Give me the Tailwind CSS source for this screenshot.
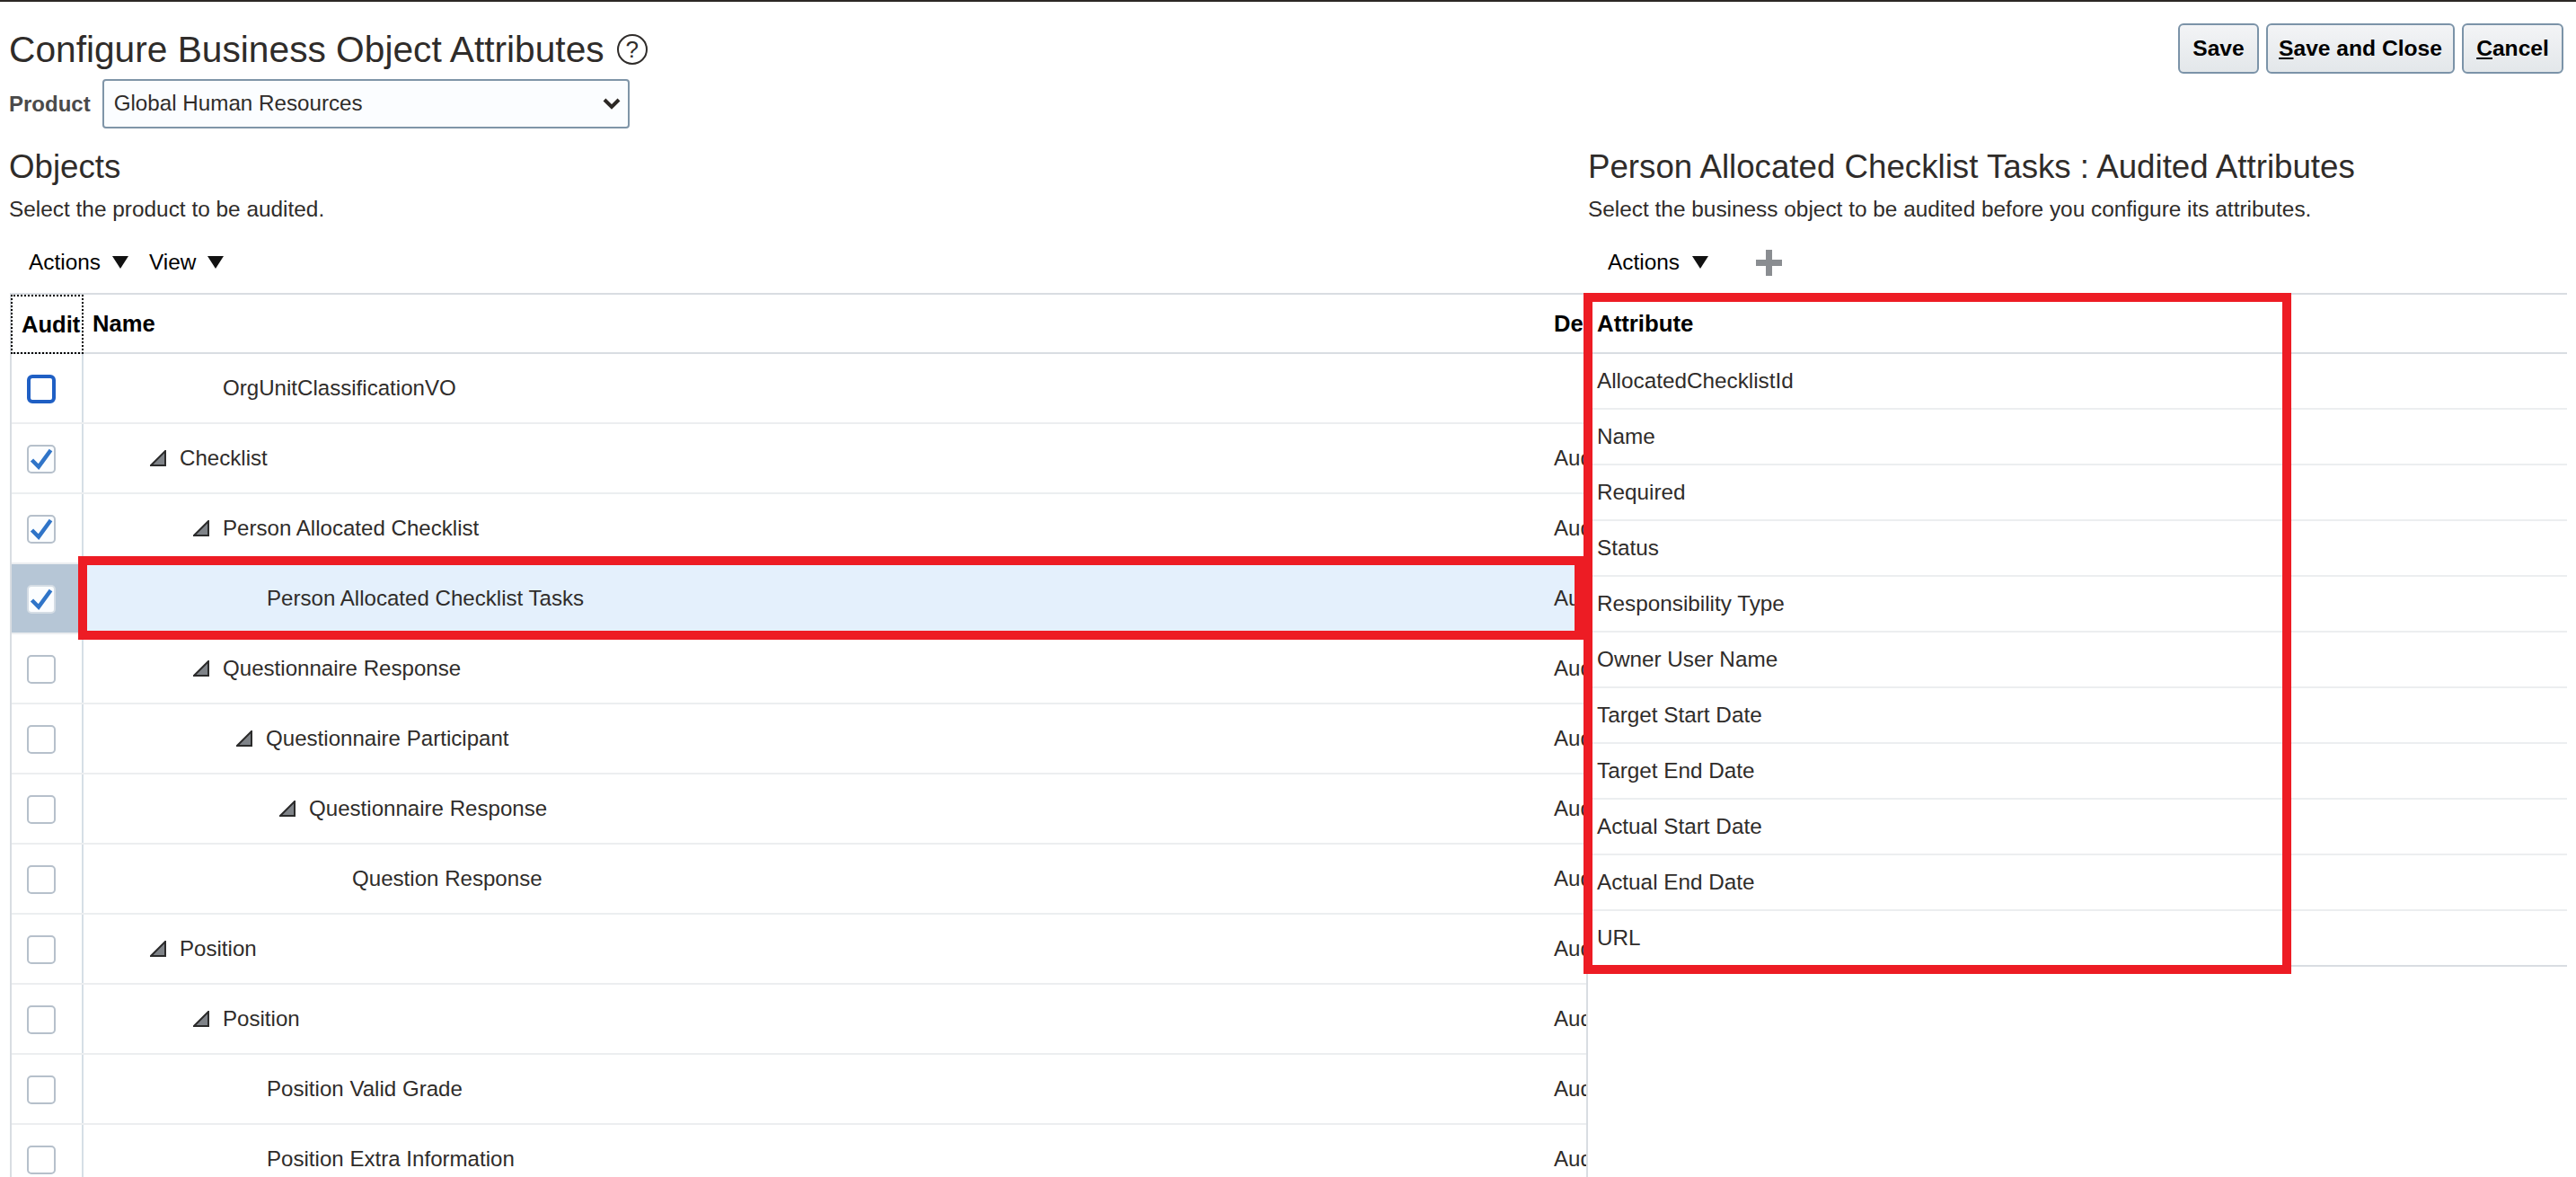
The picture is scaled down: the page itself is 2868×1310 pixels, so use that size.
<!DOCTYPE html>
<html><head><meta charset="utf-8"><title>Configure Business Object Attributes</title>
<script src="https://cdn.jsdelivr.net/npm/@tailwindcss/browser@4"></script></head>
<body class="bg-white overflow-hidden font-['Liberation_Sans',Arial,sans-serif] text-[#2f2c2a]">
<div class="w-[2868px] h-[1310px] overflow-hidden border-t-2 border-[#2c2825]">
  <!-- header -->
  <div class="flex justify-between items-start h-[86px] pl-[10px] pr-[14px]">
    <div class="flex items-center gap-[14px] h-[60px] mt-[23px]">
      <h1 class="text-[40.7px] leading-[60px] font-normal">Configure Business Object Attributes</h1>
      <span class="flex items-center justify-center w-[34px] h-[34px] rounded-full border-2 border-[#2f2c2a] text-[26px] leading-none">?</span>
    </div>
    <div class="flex gap-[8px] mt-[24px] text-[24.6px] font-bold text-black">
      <button class="h-[56px] w-[90px] rounded-[6px] border-2 border-[#7b93a8] bg-linear-to-b from-[#f3f4f6] to-[#e3e7ea]">Save</button>
      <button class="h-[56px] w-[210px] rounded-[6px] border-2 border-[#7b93a8] bg-linear-to-b from-[#f3f4f6] to-[#e3e7ea]"><u>S</u>ave and Close</button>
      <button class="h-[56px] w-[113px] rounded-[6px] border-2 border-[#7b93a8] bg-linear-to-b from-[#f3f4f6] to-[#e3e7ea]"><u>C</u>ancel</button>
    </div>
  </div>
  <div class="flex items-center gap-[13px] h-[55px] pl-[10px]">
    <span class="text-[24px] font-bold text-[#4a4a4a]">Product</span>
    <div class="flex items-center justify-between w-[587px] h-[55px] pl-[11px] pr-[8px] rounded-[4px] border-2 border-[#7f95a8] bg-[#fbfdff] text-[24.2px]">
      <span>Global Human Resources</span>
      <svg width="20" height="14" viewBox="0 0 20 14"><path d="M2 2l8 8 8-8" fill="none" stroke="#2c2825" stroke-width="4"/></svg>
    </div>
  </div>
  <!-- panels -->
  <div class="flex items-start">
    <!-- left panel -->
    <section class="w-[1768px] shrink-0">
      <h2 class="pl-[10px] mt-[16px] text-[36.7px] leading-[54px] font-normal">Objects</h2>
      <p class="pl-[10px] mt-[2px] text-[24.4px] leading-[36px]">Select the product to be audited.</p>
      <div class="flex items-center h-[68px] mt-[7px] pl-[32px] text-[24.4px] text-black">
        <span>Actions</span>
        <svg class="ml-[13px]" width="18" height="14" viewBox="0 0 18 14"><path d="M0 0h18L9 14z" fill="#111"/></svg>
        <span class="ml-[23px]">View</span>
        <svg class="ml-[13px]" width="18" height="14" viewBox="0 0 18 14"><path d="M0 0h18L9 14z" fill="#111"/></svg>
      </div>
      <div class="ml-[11px] border-l-2 border-r-2 border-t-2 border-[#d9dde2]">
        <div class="flex h-[66px] border-b-2 border-[#d9dde2] text-[25.6px] font-bold text-black">
          <div class="w-[81px] h-[66px] -ml-[1px] flex items-center pl-[10px] border-2 border-dotted border-black">Audit</div>
          <div class="w-[1626px] flex items-center pl-[10px]">Name</div>
          <div class="flex-1 flex items-center pl-[11px] overflow-hidden">De</div>
        </div>

        <div class="flex h-[78px] border-b-2 border-[#eceef0] text-[24.1px]">
          <div class="w-[80px] shrink-0 flex items-center pl-[17px] border-r-2 border-[#d6dfe6]"><span class="block mt-[2px] w-[32px] h-[32px] rounded-[6px] border-[4px] border-[#1f5fc4] bg-white"></span></div>
          <div class="w-[1626px] shrink-0 flex items-center pl-[155px]">OrgUnitClassificationVO</div>
          <div class="flex-1 min-w-0 overflow-hidden flex items-center pl-[11px]"></div>
        </div>

        <div class="flex h-[78px] border-b-2 border-[#eceef0] text-[24.1px]">
          <div class="w-[80px] shrink-0 flex items-center pl-[17px] border-r-2 border-[#d6dfe6]"><span class="block mt-[2px] w-[32px] h-[32px] rounded-[5px] border-2 border-[#b6c0cb] bg-[#fbfdff]"><svg class="w-[28px] h-[28px]" viewBox="0 0 28 28"><path d="M3.5 15l7.5 7.5L24.5 4" fill="none" stroke="#2f74c8" stroke-width="4.5"/></svg></span></div>
          <div class="w-[1626px] shrink-0 flex items-center pl-[74px]"><svg class="mr-[15px]" width="18" height="18" viewBox="0 0 18 18"><path d="M1 17h16V1z" fill="#7f8388" stroke="#2b2b2b" stroke-width="2"/></svg>Checklist</div>
          <div class="flex-1 min-w-0 overflow-hidden flex items-center pl-[11px] whitespace-nowrap">Audited</div>
        </div>

        <div class="flex h-[78px] border-b-2 border-[#eceef0] text-[24.1px]">
          <div class="w-[80px] shrink-0 flex items-center pl-[17px] border-r-2 border-[#d6dfe6]"><span class="block mt-[2px] w-[32px] h-[32px] rounded-[5px] border-2 border-[#b6c0cb] bg-[#fbfdff]"><svg class="w-[28px] h-[28px]" viewBox="0 0 28 28"><path d="M3.5 15l7.5 7.5L24.5 4" fill="none" stroke="#2f74c8" stroke-width="4.5"/></svg></span></div>
          <div class="w-[1626px] shrink-0 flex items-center pl-[122px]"><svg class="mr-[15px]" width="18" height="18" viewBox="0 0 18 18"><path d="M1 17h16V1z" fill="#7f8388" stroke="#2b2b2b" stroke-width="2"/></svg>Person Allocated Checklist</div>
          <div class="flex-1 min-w-0 overflow-hidden flex items-center pl-[11px] whitespace-nowrap">Audited</div>
        </div>

        <div class="relative flex h-[78px] border-b-2 border-[#eceef0] text-[24.1px] bg-[#e4f0fc]">
          <div class="w-[80px] shrink-0 flex items-center pl-[17px] bg-[#b6c6d6]"><span class="block mt-[2px] w-[32px] h-[32px] rounded-[5px] border-2 border-[#d5dde5] bg-[#fbfdff]"><svg class="w-[28px] h-[28px]" viewBox="0 0 28 28"><path d="M3.5 15l7.5 7.5L24.5 4" fill="none" stroke="#2f74c8" stroke-width="4.5"/></svg></span></div>
          <div class="w-[1626px] shrink-0 flex items-center pl-[204px]">Person Allocated Checklist Tasks</div>
          <div class="flex-1 min-w-0 overflow-hidden flex items-center pl-[11px] whitespace-nowrap">Audited</div>
          <div class="absolute left-[74px] top-[-9px] w-[1676px] h-[93px] border-[10px] border-[#ed1c24]"></div>
        </div>

        <div class="flex h-[78px] border-b-2 border-[#eceef0] text-[24.1px]">
          <div class="w-[80px] shrink-0 flex items-center pl-[17px] border-r-2 border-[#d6dfe6]"><span class="block mt-[2px] w-[32px] h-[32px] rounded-[5px] border-2 border-[#b6c0cb] bg-white"></span></div>
          <div class="w-[1626px] shrink-0 flex items-center pl-[122px]"><svg class="mr-[15px]" width="18" height="18" viewBox="0 0 18 18"><path d="M1 17h16V1z" fill="#7f8388" stroke="#2b2b2b" stroke-width="2"/></svg>Questionnaire Response</div>
          <div class="flex-1 min-w-0 overflow-hidden flex items-center pl-[11px] whitespace-nowrap">Audited</div>
        </div>

        <div class="flex h-[78px] border-b-2 border-[#eceef0] text-[24.1px]">
          <div class="w-[80px] shrink-0 flex items-center pl-[17px] border-r-2 border-[#d6dfe6]"><span class="block mt-[2px] w-[32px] h-[32px] rounded-[5px] border-2 border-[#b6c0cb] bg-white"></span></div>
          <div class="w-[1626px] shrink-0 flex items-center pl-[170px]"><svg class="mr-[15px]" width="18" height="18" viewBox="0 0 18 18"><path d="M1 17h16V1z" fill="#7f8388" stroke="#2b2b2b" stroke-width="2"/></svg>Questionnaire Participant</div>
          <div class="flex-1 min-w-0 overflow-hidden flex items-center pl-[11px] whitespace-nowrap">Audited</div>
        </div>

        <div class="flex h-[78px] border-b-2 border-[#eceef0] text-[24.1px]">
          <div class="w-[80px] shrink-0 flex items-center pl-[17px] border-r-2 border-[#d6dfe6]"><span class="block mt-[2px] w-[32px] h-[32px] rounded-[5px] border-2 border-[#b6c0cb] bg-white"></span></div>
          <div class="w-[1626px] shrink-0 flex items-center pl-[218px]"><svg class="mr-[15px]" width="18" height="18" viewBox="0 0 18 18"><path d="M1 17h16V1z" fill="#7f8388" stroke="#2b2b2b" stroke-width="2"/></svg>Questionnaire Response</div>
          <div class="flex-1 min-w-0 overflow-hidden flex items-center pl-[11px] whitespace-nowrap">Audited</div>
        </div>

        <div class="flex h-[78px] border-b-2 border-[#eceef0] text-[24.1px]">
          <div class="w-[80px] shrink-0 flex items-center pl-[17px] border-r-2 border-[#d6dfe6]"><span class="block mt-[2px] w-[32px] h-[32px] rounded-[5px] border-2 border-[#b6c0cb] bg-white"></span></div>
          <div class="w-[1626px] shrink-0 flex items-center pl-[299px]">Question Response</div>
          <div class="flex-1 min-w-0 overflow-hidden flex items-center pl-[11px] whitespace-nowrap">Audited</div>
        </div>

        <div class="flex h-[78px] border-b-2 border-[#eceef0] text-[24.1px]">
          <div class="w-[80px] shrink-0 flex items-center pl-[17px] border-r-2 border-[#d6dfe6]"><span class="block mt-[2px] w-[32px] h-[32px] rounded-[5px] border-2 border-[#b6c0cb] bg-white"></span></div>
          <div class="w-[1626px] shrink-0 flex items-center pl-[74px]"><svg class="mr-[15px]" width="18" height="18" viewBox="0 0 18 18"><path d="M1 17h16V1z" fill="#7f8388" stroke="#2b2b2b" stroke-width="2"/></svg>Position</div>
          <div class="flex-1 min-w-0 overflow-hidden flex items-center pl-[11px] whitespace-nowrap">Audited</div>
        </div>

        <div class="flex h-[78px] border-b-2 border-[#eceef0] text-[24.1px]">
          <div class="w-[80px] shrink-0 flex items-center pl-[17px] border-r-2 border-[#d6dfe6]"><span class="block mt-[2px] w-[32px] h-[32px] rounded-[5px] border-2 border-[#b6c0cb] bg-white"></span></div>
          <div class="w-[1626px] shrink-0 flex items-center pl-[122px]"><svg class="mr-[15px]" width="18" height="18" viewBox="0 0 18 18"><path d="M1 17h16V1z" fill="#7f8388" stroke="#2b2b2b" stroke-width="2"/></svg>Position</div>
          <div class="flex-1 min-w-0 overflow-hidden flex items-center pl-[11px] whitespace-nowrap">Audited</div>
        </div>

        <div class="flex h-[78px] border-b-2 border-[#eceef0] text-[24.1px]">
          <div class="w-[80px] shrink-0 flex items-center pl-[17px] border-r-2 border-[#d6dfe6]"><span class="block mt-[2px] w-[32px] h-[32px] rounded-[5px] border-2 border-[#b6c0cb] bg-white"></span></div>
          <div class="w-[1626px] shrink-0 flex items-center pl-[204px]">Position Valid Grade</div>
          <div class="flex-1 min-w-0 overflow-hidden flex items-center pl-[11px] whitespace-nowrap">Audited</div>
        </div>

        <div class="flex h-[78px] border-b-2 border-[#eceef0] text-[24.1px]">
          <div class="w-[80px] shrink-0 flex items-center pl-[17px] border-r-2 border-[#d6dfe6]"><span class="block mt-[2px] w-[32px] h-[32px] rounded-[5px] border-2 border-[#b6c0cb] bg-white"></span></div>
          <div class="w-[1626px] shrink-0 flex items-center pl-[204px]">Position Extra Information</div>
          <div class="flex-1 min-w-0 overflow-hidden flex items-center pl-[11px] whitespace-nowrap">Audited</div>
        </div>
      </div>
    </section>
    <!-- right panel -->
    <section class="w-[1090px] shrink-0">
      <h2 class="mt-[16px] text-[36.7px] leading-[54px] font-normal whitespace-nowrap">Person Allocated Checklist Tasks : Audited Attributes</h2>
      <p class="mt-[2px] text-[24.4px] leading-[36px]">Select the business object to be audited before you configure its attributes.</p>
      <div class="flex items-center h-[68px] mt-[7px] pl-[22px] text-[24.4px] text-black">
        <span>Actions</span>
        <svg class="ml-[14px]" width="18" height="14" viewBox="0 0 18 14"><path d="M0 0h18L9 14z" fill="#111"/></svg>
        <svg class="ml-[53px]" width="29" height="29" viewBox="0 0 29 29"><path d="M11 0h7v11h11v7H18v11h-7V18H0v-7h11z" fill="#8a8d91"/></svg>
      </div>
      <div class="relative border-t-2 border-b-2 border-[#d9dde2] text-[24.3px]">
        <div class="absolute left-[-5px] top-[-2px] w-[788px] h-[758px] border-[10px] border-[#ed1c24]"></div>
        <div class="flex items-center h-[66px] pl-[10px] border-b-2 border-[#d9dde2] text-[25.8px] font-bold text-black">Attribute</div>
        <div class="flex items-center h-[62px] pl-[10px] border-b-2 border-[#eceef0]">AllocatedChecklistId</div>
        <div class="flex items-center h-[62px] pl-[10px] border-b-2 border-[#eceef0]">Name</div>
        <div class="flex items-center h-[62px] pl-[10px] border-b-2 border-[#eceef0]">Required</div>
        <div class="flex items-center h-[62px] pl-[10px] border-b-2 border-[#eceef0]">Status</div>
        <div class="flex items-center h-[62px] pl-[10px] border-b-2 border-[#eceef0]">Responsibility Type</div>
        <div class="flex items-center h-[62px] pl-[10px] border-b-2 border-[#eceef0]">Owner User Name</div>
        <div class="flex items-center h-[62px] pl-[10px] border-b-2 border-[#eceef0]">Target Start Date</div>
        <div class="flex items-center h-[62px] pl-[10px] border-b-2 border-[#eceef0]">Target End Date</div>
        <div class="flex items-center h-[62px] pl-[10px] border-b-2 border-[#eceef0]">Actual Start Date</div>
        <div class="flex items-center h-[62px] pl-[10px] border-b-2 border-[#eceef0]">Actual End Date</div>
        <div class="flex items-center h-[60px] pl-[10px]">URL</div>
      </div>
    </section>
  </div>
</div>
</body></html>
